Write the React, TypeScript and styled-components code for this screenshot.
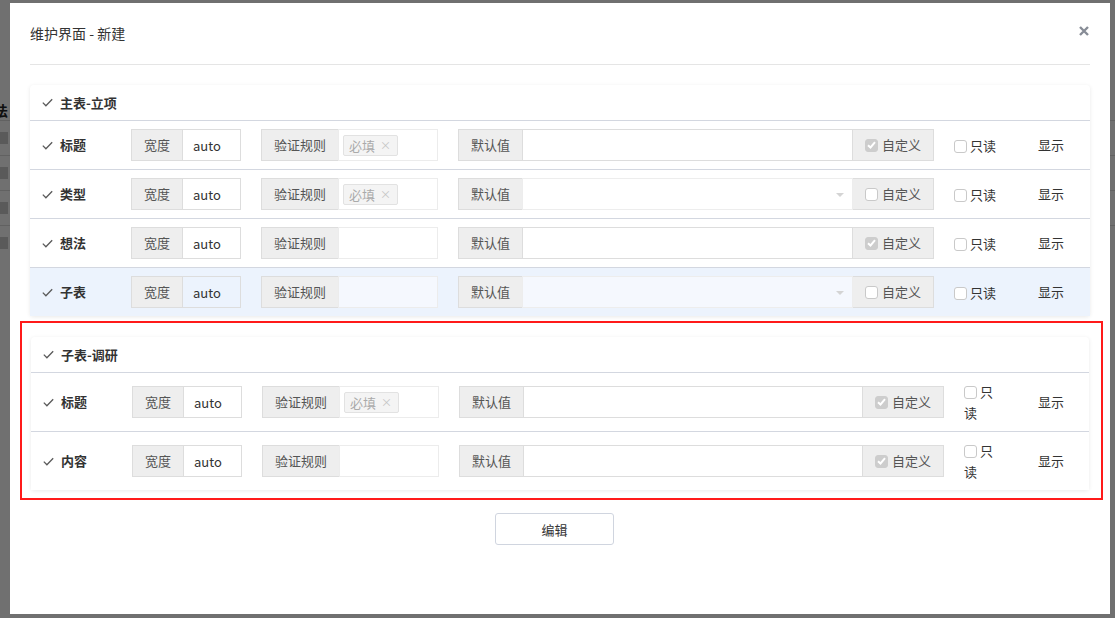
import React from "react";
import styled, { createGlobalStyle } from "styled-components";

const GlobalStyle = createGlobalStyle`
  html, body { margin: 0; padding: 0; }
  body {
    font-family: "Noto Sans CJK SC", "Noto Sans", sans-serif;
    font-size: 13px;
    color: #333;
    background: #fff;
  }
  * { box-sizing: border-box; }
`;

/* page behind the dialog */
const BackPage = styled.div`
  width: 100%;
  height: 618px;
  padding-top: 100px;
  overflow: hidden;
`;

const BackText = styled.div`
  margin-left: -6px;
  font-weight: bold;
  font-size: 14px;
  line-height: 20px;
  color: #222;
`;

const BackRow = styled.div`
  height: 35px;
  border-top: 1px solid #ddd;
  display: flex;
  align-items: center;
`;

const BackCell = styled.div`
  width: 8px;
  height: 12px;
  background: #ccc;
`;

const Mask = styled.div`
  position: fixed;
  inset: 0;
  background: rgba(0, 0, 0, 0.56);
  display: flex;
  align-items: flex-start;
`;

const Modal = styled.div`
  margin: 3px 0 0 10px;
  width: 1100px;
  height: 611px;
  background: #fff;
  display: flex;
  flex-direction: column;
`;

const ModalHeader = styled.div`
  margin: 0 20px;
  height: 62px;
  border-bottom: 1px solid #e5e5e5;
  display: flex;
  align-items: center;
  justify-content: space-between;
  padding-bottom: 2px;
`;

const Title = styled.div`
  font-size: 14px;
  line-height: 20px;
  color: #333;
`;

const CloseButton = styled.button`
  border: none;
  background: none;
  padding: 0;
  margin-right: 1px;
  margin-top: -4px;
  display: flex;
  cursor: pointer;
`;

const Body = styled.div`
  padding: 20px 20px 0;
`;

const Panel = styled.div`
  background: #fff;
  border-radius: 4px;
  box-shadow: 0 1px 4px rgba(0, 0, 0, 0.09);
`;

const PanelHeader = styled.div`
  height: 36px;
  padding: 0 12px;
  display: flex;
  align-items: center;
  gap: 7px;
  font-weight: bold;
  font-size: 13px;
  border-bottom: 1px solid #d3d7e0;
`;

const Highlight = styled.div`
  margin: 5px -13px 0 -10px;
  border: 2px solid #ff1a1a;
  padding: 14px 12px 8px 9px;
`;

const Row = styled.div<{ $cols: string; $active?: boolean }>`
  display: grid;
  grid-template-columns: ${(p) => p.$cols};
  align-items: center;
  padding: 8px 0;
  border-bottom: 1px solid #d3d7e0;
  background: ${(p) => (p.$active ? "#ecf3fd" : "#fff")};
  &:last-child {
    border-bottom: none;
  }
`;

const NameCell = styled.div`
  padding-left: 12px;
  display: flex;
  align-items: center;
  gap: 7px;
  font-weight: bold;
  line-height: 20px;
`;

const Group = styled.div`
  display: flex;
  height: 32px;
  width: calc(100% - 20px);
`;

const Addon = styled.div<{ $side?: "left" | "right" }>`
  flex: none;
  display: flex;
  align-items: center;
  gap: 4px;
  padding: 0 12px;
  background: #eee;
  border: 1px solid #ddd;
  ${(p) => (p.$side === "right" ? "border-left: none;" : "border-right: none;")}
  color: #555;
  line-height: 20px;
`;

const TextInput = styled.input<{ $active?: boolean }>`
  flex: 1;
  min-width: 0;
  border: 1px solid #ddd;
  padding: 0 10px;
  font: inherit;
  color: #333;
  background: ${(p) => (p.$active ? "transparent" : "#fff")};
  outline: none;
`;

const TagField = styled.div<{ $active?: boolean }>`
  flex: 1;
  border: 1px solid #ececec;
  background: ${(p) => (p.$active ? "#f5f8fe" : "#fff")};
  padding: 0 4px;
  display: flex;
  align-items: center;
`;

const Tag = styled.span`
  display: inline-flex;
  align-items: center;
  height: 21px;
  padding: 0 6px 0 5px;
  background: #f4f4f4;
  border: 1px solid #e2e2e2;
  border-radius: 2px;
  color: #aaa;
  line-height: 19px;
`;

const TagClose = styled.span`
  margin-left: 5px;
  font-size: 11px;
  color: #c4c4c4;
`;

const SelectBox = styled.div<{ $active?: boolean }>`
  flex: 1;
  position: relative;
  border: 1px solid #ededed;
  background: ${(p) => (p.$active ? "#f5f8fe" : "#fff")};
`;

const Caret = styled.span`
  position: absolute;
  right: 8px;
  top: 14px;
  border-left: 4px solid transparent;
  border-right: 4px solid transparent;
  border-top: 4px solid #d4d4d4;
`;

const Box = styled.span<{ $checked?: boolean }>`
  display: inline-flex;
  align-items: center;
  justify-content: center;
  width: 13px;
  height: 13px;
  border-radius: 3px;
  border: 1px solid ${(p) => (p.$checked ? "#cdcdcd" : "#c9c9c9")};
  background: ${(p) => (p.$checked ? "#cdcdcd" : "#fff")};
  vertical-align: -2px;
  flex: none;
`;

const ReadOnly = styled.div<{ $width?: string }>`
  width: ${(p) => p.$width || "auto"};
  line-height: 21px;
  color: #333;
  ${Box} {
    margin-right: 3px;
  }
`;

const ShowCell = styled.div`
  line-height: 20px;
  color: #333;
`;

const Footer = styled.div`
  display: flex;
  justify-content: center;
  padding-right: 11px;
  margin-top: 13px;
`;

const Button = styled.button`
  width: 119px;
  height: 32px;
  border: 1px solid #d0d5df;
  border-radius: 3px;
  background: #fff;
  font: inherit;
  color: #333;
  cursor: pointer;
`;

const Tick = ({ color = "#5a5a5a" }: { color?: string }) => (
  <svg width="11" height="9" viewBox="0 0 11 9">
    <path d="M0.8 4.6 L3.9 7.7 L10.2 1.2" fill="none" stroke={color} strokeWidth="1.3" />
  </svg>
);

const CheckBox = ({ checked }: { checked?: boolean }) => (
  <Box $checked={checked}>
    {checked && (
      <svg width="9" height="8" viewBox="0 0 9 8">
        <path d="M1 4.2 L3.5 6.5 L8 1.2" fill="none" stroke="#fff" strokeWidth="2" />
      </svg>
    )}
  </Box>
);

type Field = {
  name: string;
  required?: boolean;
  select?: boolean;
  custom?: boolean;
  active?: boolean;
};

type Section = {
  title: string;
  cols: string;
  readonlyWidth?: string;
  fields: Field[];
};

const mainSection: Section = {
  title: "主表-立项",
  cols: "101px 130px 197px 496px 84px 1fr",
  fields: [
    { name: "标题", required: true, custom: true },
    { name: "类型", required: true, select: true },
    { name: "想法", custom: true },
    { name: "子表", select: true, active: true },
  ],
};

const subSection: Section = {
  title: "子表-调研",
  cols: "101px 130px 197px 505px 74px 1fr",
  readonlyWidth: "38px",
  fields: [
    { name: "标题", required: true, custom: true },
    { name: "内容", custom: true },
  ],
};

const SectionPanel = ({ section }: { section: Section }) => (
  <Panel>
    <PanelHeader>
      <Tick />
      {section.title}
    </PanelHeader>
    {section.fields.map((f, i) => (
      <Row key={i} $cols={section.cols} $active={f.active}>
        <NameCell>
          <Tick />
          {f.name}
        </NameCell>
        <Group>
          <Addon>宽度</Addon>
          <TextInput $active={f.active} defaultValue="auto" readOnly />
        </Group>
        <Group>
          <Addon>验证规则</Addon>
          <TagField $active={f.active}>
            {f.required && (
              <Tag>
                必填<TagClose>×</TagClose>
              </Tag>
            )}
          </TagField>
        </Group>
        <Group>
          <Addon>默认值</Addon>
          {f.select ? (
            <SelectBox $active={f.active}>
              <Caret />
            </SelectBox>
          ) : (
            <TextInput $active={f.active} defaultValue="" readOnly />
          )}
          <Addon $side="right">
            <CheckBox checked={f.custom} />
            自定义
          </Addon>
        </Group>
        <ReadOnly $width={section.readonlyWidth}>
          <CheckBox />
          只读
        </ReadOnly>
        <ShowCell>显示</ShowCell>
      </Row>
    ))}
  </Panel>
);

const App = () => {
  return (
    <>
      <GlobalStyle />
      <BackPage>
        <BackText>法</BackText>
        {[0, 1, 2, 3].map((i) => (
          <BackRow key={i}>
            <BackCell />
          </BackRow>
        ))}
      </BackPage>
      <Mask>
        <Modal>
          <ModalHeader>
            <Title>维护界面 - 新建</Title>
            <CloseButton aria-label="close">
              <svg width="10" height="10" viewBox="0 0 10 10">
                <path d="M1 1 L9 9 M9 1 L1 9" stroke="#878c96" strokeWidth="2.4" />
              </svg>
            </CloseButton>
          </ModalHeader>
          <Body>
            <SectionPanel section={mainSection} />
            <Highlight>
              <SectionPanel section={subSection} />
            </Highlight>
            <Footer>
              <Button>编辑</Button>
            </Footer>
          </Body>
        </Modal>
      </Mask>
    </>
  );
};

export default App;
